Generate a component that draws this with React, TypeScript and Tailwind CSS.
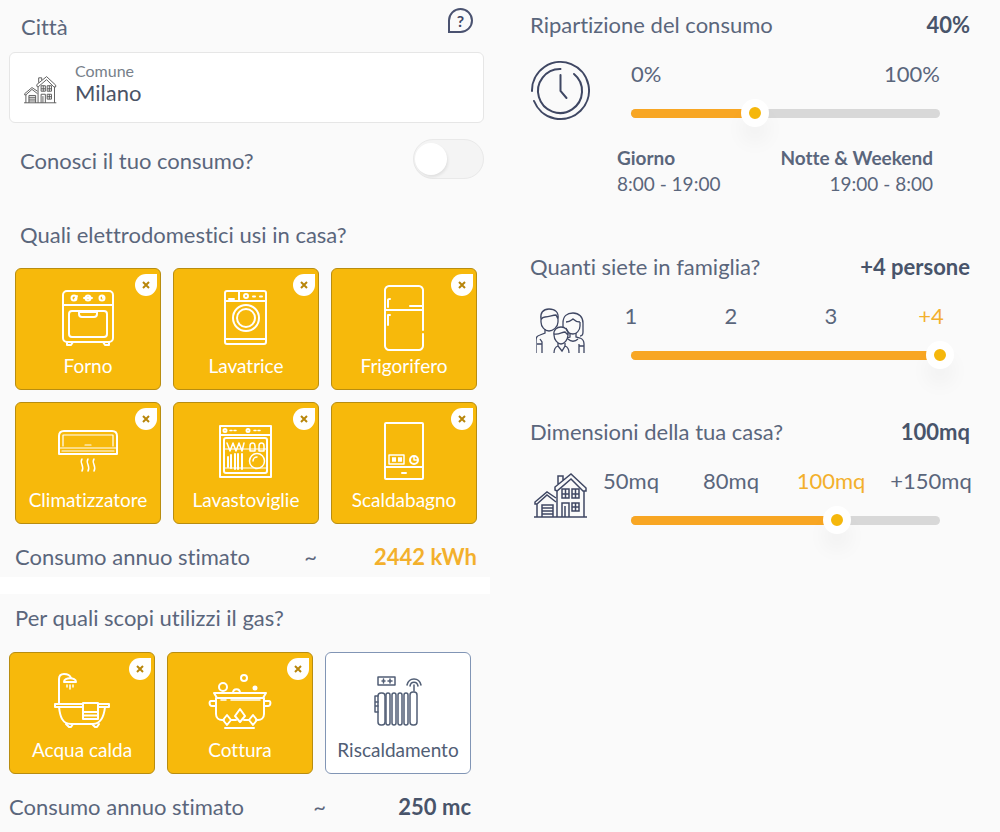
import { useState, type ReactNode } from "react";
import clsx from "clsx";

function OvenIcon() {
  return (
    <>
      <rect x="8" y="6" width="50" height="51" rx="4" />
      <path d="M8 20h50M12 57v3h4l2-3M54 57v3h-4l-2-3" />
      <rect x="14" y="26" width="38" height="26" rx="3" />
      <path d="M24 27h18v2c0 2-1 3-3 3H27c-2 0-3-1-3-3z" />
      <circle cx="19" cy="13" r="2.5" />
      <circle cx="33" cy="13" r="2.5" />
      <circle cx="47" cy="13" r="2.5" />
      <path d="M29 13h8M20 14l2-3M48 13v-2" />
    </>
  );
}

function WasherIcon() {
  return (
    <>
      <rect x="12" y="6" width="41" height="53" rx="2" />
      <path d="M12 16h41M26 6v10M12 54h41M16 14h5M40 11.500h2M47 11.500h2" />
      <circle cx="33" cy="33" r="13" />
      <circle cx="33" cy="33" r="9" />
      <circle cx="33" cy="11" r="2" />
    </>
  );
}

function FridgeIcon() {
  return (
    <>
      <path d="M52 45V5c0-2-2-4-4-4H18c-2 0-4 2-4 4v56c0 2 2 4 4 4h30c2 0 4-2 4-4V49" />
      <path d="M14 25h38M39 21h12M17 22v-7c0-1 1-1 2-1M17 40V30h2" />
    </>
  );
}

function AirConditionerIcon() {
  return (
    <>
      <path d="M4 35V17c0-3 2-5 5-5h48c3 0 5 2 5 5v18z" />
      <path d="M8 27V16h50v11M4 29h58M30 26h6M7 32h52" strokeWidth="1.2" />
      <path d="M27 40c-3 4 3 7 0 12M33 40c-3 4 3 7 0 12M39 40c-3 4 3 7 0 12" strokeWidth="1.5" />
    </>
  );
}

function DishwasherIcon() {
  return (
    <>
      <path d="M7 7h51v51H7zM7 16h51" />
      <rect x="11" y="19" width="43" height="35" rx="2" />
      <path d="M12 30h41M12 49h41" strokeWidth="1.2" />
      <path d="M14 24l3 8 3-8 3 8 3-8 3 8 2-8M37 32v-5c0-4 5-4 5 0v5zM46 32v-5c0-4 5-4 5 0v5z" strokeWidth="1.5" />
      <path d="M15 38v10M18 36v13M22 35v15M25 35v15M29 35v15" />
      <circle cx="44" cy="42" r="7.5" strokeWidth="1.5" />
      <path d="M40 42a4 4 0 0 1 4-4" strokeWidth="1.5" />
      <circle cx="12" cy="11.5" r="1.5" />
      <circle cx="35" cy="11.5" r="1.5" />
      <path d="M17 11.5h2M21 11.5h2M41 11.5h2M45 11.5h2" strokeWidth="1.5" />
    </>
  );
}

function BoilerIcon() {
  return (
    <>
      <rect x="14" y="4" width="38" height="56" rx="1" />
      <path d="M14 48h38M31 54h4" />
      <path d="M18 36h15v9H18z" strokeWidth="1.5" />
      <path d="M22 39v3M24 39v3M28 39v3M30 39v3" />
      <circle cx="43" cy="41" r="4" />
      <path d="M43 38v3h3" strokeWidth="1.5" />
    </>
  );
}

function BathIcon() {
  return (
    <>
      <path d="M10 35V10c0-3 2-5 5-5s6 1 7 4" />
      <path d="M15 13c0-5 12-5 12 0z" />
      <path d="M18 16v2M21 16v4M24 16v2" strokeWidth="1.5" />
      <path d="M34 35H6v3h28M49 35h11v3H49M10 38c1 9 3 17 12 17h22c8 0 11-8 12-17" />
      <path d="M34 34h15v16H34zM35 43h13M35 46.500h13" />
      <path d="M17 55l3 3h2l2-3M43 55l3 3h2l2-3" />
    </>
  );
}

function PotIcon() {
  return (
    <>
      <path d="M7 24h52l-3 5H10zM9 29v16c0 4 3 6 6 6h2M57 29v16c0 4-3 6-6 6h-2" />
      <path d="M9 32H4c-2 0-2 5 1 5h4M57 32h5c2 0 2 5-1 5h-4" />
      <path d="M14 31h5M24 31h29" strokeWidth="1.5" />
      <path d="M20 46l4 5-4 5-4-5zM33 40l5 7-5 6-5-6zM46 46l4 5-4 5-4-5z" />
      <path d="M18 59h29M24 51h5M37 51h5" />
      <circle cx="16" cy="18" r="4" />
      <circle cx="37" cy="9" r="3" />
      <circle cx="48" cy="19" r="1.5" fill="currentColor" />
      <path d="M26 24c0-5 7-5 7 0" />
    </>
  );
}

function RadiatorIcon() {
  return (
    <g strokeWidth="1.5">
      <path d="M13 8h17v8H13zM17 12h3M23 12h4M18.500 10v4M25 10v4" />
      <rect x="13" y="24" width="7" height="32" rx="3" />
      <path d="M13 27h-3v6h3M13 37h-3v6h3M10 33v4" />
      <rect x="21" y="24" width="4" height="32" rx="2" />
      <rect x="27" y="24" width="4" height="32" rx="2" />
      <rect x="33" y="24" width="4" height="32" rx="2" />
      <rect x="39" y="24" width="4" height="32" rx="2" />
      <rect x="45" y="23" width="7" height="33" rx="3" />
      <path d="M49 22v-6M42 16c2-8 12-8 14 0M45 17c1-5 7-5 8 0" />
    </g>
  );
}

function HouseIcon({ className }: { className: string }) {
  return (
    <svg viewBox="0 0 54 46" className={className} fill="none" stroke="currentColor" strokeWidth="1.5" aria-hidden="true">
      <path d="M21 17v-3L37 1l15 14v3h-3L37 6 23 18zM24 11V3h5v4M23 18v26M50 18v26" />
      <path d="M22 29l-9-7-10 9H1v-2l12-10 9 6M3 31v13M0 44h53" />
      <path d="M28 16h7v9h-7zM28 21h7M31.500 16v9M38 16h7v9h-7zM38 21h7M41.500 16v9M38 30h7v8h-7zM38 34h7M41.500 30v8" />
      <path d="M28 44V30h7v14M31 44V33M8 44V32h11v12M8 35h11M8 38h11M8 41h11" />
    </svg>
  );
}

function FamilyIcon() {
  return (
    <svg viewBox="0 0 50 46" className="mt-1.5 ml-1.5 h-[46px] w-[50px]" fill="none" stroke="currentColor" strokeWidth="1.3" aria-hidden="true">
      <path d="M5 11C4 5 7 1 13 1s10 3 9 10M5 11v3c0 5 4 9 8 9s9-4 9-9v-3M5 12c1-2 1-3 4-3 5 0 7-2 11-2l2 4" />
      <path d="M9 21v4l-5 2c-3 1-4 2-4 6v12M6 45V34l-2-3M1 36h5" />
      <path d="M27 19v-4c0-7 4-10 10-10s10 4 10 10v9c0 3-1 4-3 4M30 14c5 0 6-3 7-3 2 2 4 3 7 3M30 20c1 4 4 6 7 6s7-3 7-8v-4" />
      <path d="M34 25v4l-3 1M40 25v4l4 1c3 1 4 3 4 6v9M43 45V36M43 38h5M32 31c3 3 7 3 10 0" />
      <path d="M18 27c-1-5 3-8 7-8s8 3 7 8c0 5-4 9-7 9s-7-4-7-9zM18 26c5 1 8-2 11-2l3 3" />
      <path d="M22 35v3l4 5 3-5v-3M22 38c-3 1-4 3-4 7M29 38c3 1 4 3 4 7" />
    </svg>
  );
}

function ClockIcon() {
  return (
    <svg viewBox="0 0 60 60" className="mt-px h-[60px] w-[60px]" fill="none" stroke="currentColor" strokeWidth="2" strokeLinecap="round" aria-hidden="true">
      <path d="M2 30A28.500 28.500 0 1 1 4 40" />
      <path d="M30.500 8A22 22 0 1 0 44 13" />
      <path d="M30.500 14v16l6 7" />
    </svg>
  );
}

interface TileProps {
  name: string;
  icon: ReactNode;
  initial?: boolean;
}

function Tile({ name, icon, initial = true }: TileProps) {
  const [selected, setSelected] = useState(initial);

  return (
    <div className="relative">
      <button
        type="button"
        aria-pressed={selected}
        onClick={() => setSelected(true)}
        className={clsx(
          "flex h-[122px] w-full flex-col items-center rounded-md border pt-4 text-[19px] leading-[30px]",
          selected ? "border-[#b88d10] bg-[#f7b90b] text-white" : "border-[#8195b5] bg-white text-[#515e75]"
        )}
      >
        <svg viewBox="0 0 66 66" className="size-[66px]" fill="none" stroke="currentColor" strokeWidth="2" strokeLinecap="round" strokeLinejoin="round" aria-hidden="true">
          {icon}
        </svg>
        {name}
      </button>
      {selected && (
        <button
          type="button"
          aria-label={`Rimuovi ${name}`}
          onClick={() => setSelected(false)}
          className="absolute top-1.5 right-1 flex size-[22px] items-center justify-center rounded-full rounded-tr-md bg-white text-[#b8860b]"
        >
          <svg viewBox="0 0 8 8" className="size-2" stroke="currentColor" strokeWidth="2" aria-hidden="true">
            <path d="M1 1l6 6M7 1L1 7" />
          </svg>
        </button>
      )}
    </div>
  );
}

interface SliderProps {
  label: string;
  value: number;
  max: number;
  onChange: (value: number) => void;
}

function Slider({ label, value, max, onChange }: SliderProps) {
  return (
    <div className="relative mt-[21px] mr-[41px] ml-[50px] h-[9px] rounded-full bg-[#d8d8d8]">
      <div className="h-full rounded-full bg-[#f8a623]" style={{ width: `${(value / max) * 100}%` }} />
      {/* the input is one thumb wider than the track, so the thumb centre reaches both ends */}
      <input
        type="range"
        aria-label={label}
        min={0}
        max={max}
        value={value}
        onChange={(e) => onChange(Number(e.target.value))}
        className="absolute -inset-x-3.5 -top-2.5 h-7 cursor-pointer appearance-none bg-transparent [&::-webkit-slider-thumb]:size-7 [&::-webkit-slider-thumb]:appearance-none [&::-webkit-slider-thumb]:rounded-full [&::-webkit-slider-thumb]:border-8 [&::-webkit-slider-thumb]:border-white [&::-webkit-slider-thumb]:bg-[#f5b70c] [&::-webkit-slider-thumb]:shadow-[0_16px_20px_rgba(0,0,0,0.04)]"
      />
    </div>
  );
}

interface QuestionProps {
  title: string;
  value: string;
  icon: ReactNode;
  children: ReactNode;
}

function Question({ title, value, icon, children }: QuestionProps) {
  return (
    <section>
      <div className="mr-[11px] flex justify-between">
        <h2>{title}</h2>
        <strong className="font-bold text-[#48546a]">{value}</strong>
      </div>
      <div className="mt-[21px] flex">
        <div className="w-[60px] shrink-0 text-[#3f4763]">{icon}</div>
        <div className="-ml-[9px] flex-1">{children}</div>
      </div>
    </section>
  );
}

function Steps({ steps, active }: { steps: string[]; active: number }) {
  return (
    <div className="grid grid-cols-4 text-center">
      {steps.map((step, i) => (
        <span key={step} className={clsx(i === active && "text-[#f3b02c]")}>
          {step}
        </span>
      ))}
    </div>
  );
}

const people = ["1", "2", "3", "+4"];
const sizes = ["50mq", "80mq", "100mq", "+150mq"];

export default function App() {
  const [city, setCity] = useState("Milano");
  const [share, setShare] = useState(40);
  const [family, setFamily] = useState(3);
  const [size, setSize] = useState(2);

  return (
    <main className="grid min-h-screen grid-cols-2 bg-[#fafafa] font-['Lato',sans-serif] text-[22px] leading-7 text-[#5a667c] [font-variant-ligatures:none]">
      <div className="pt-2">
        <div className="pr-4 pl-[9px]">
          <div className="mb-[11px] flex items-start justify-between pr-[11px] pl-3">
            <h2 className="pt-[5px]">Città</h2>
            <button type="button" aria-label="Aiuto" className="flex size-[25px] items-center justify-center rounded-full rounded-bl-xs border-2 border-[#4a5270] text-base font-bold text-[#3f4763]">
              ?
            </button>
          </div>
          <div className="flex h-[71px] items-center rounded-md border border-[#e6e6e6] bg-white">
            <HouseIcon className="mt-1 mr-[18px] ml-3.5 h-7 w-[33px] text-[#555]" />
            <div className="flex flex-1 flex-col pb-2.5">
              <label htmlFor="city" className="text-base leading-5 text-[#777f8a]">
                Comune
              </label>
              <input id="city" value={city} onChange={(e) => setCity(e.target.value)} className="h-6 w-full leading-6 text-[#4a5366] outline-none" />
            </div>
          </div>
          <div className="mt-4 flex h-10 items-center justify-between pl-[11px]">
            <label htmlFor="known" className="pt-1">
              Conosci il tuo consumo?
            </label>
            <input
              id="known"
              type="checkbox"
              role="switch"
              className="flex h-10 w-[71px] cursor-pointer appearance-none items-center rounded-full border border-[#e9e9e9] bg-[#f4f4f4] pl-px before:size-8 before:rounded-full before:bg-white before:shadow-[1px_2px_3px_rgba(0,0,0,0.08)] checked:justify-end checked:bg-[#f7b90b]"
            />
          </div>
          <h2 className="mt-[42px] pl-[11px]">Quali elettrodomestici usi in casa?</h2>
          <div className="mt-[19px] mr-[7px] ml-1.5 grid grid-cols-3 gap-3">
            <Tile name="Forno" icon={<OvenIcon />} />
            <Tile name="Lavatrice" icon={<WasherIcon />} />
            <Tile name="Frigorifero" icon={<FridgeIcon />} />
            <Tile name="Climatizzatore" icon={<AirConditionerIcon />} />
            <Tile name="Lavastoviglie" icon={<DishwasherIcon />} />
            <Tile name="Scaldabagno" icon={<BoilerIcon />} />
          </div>
          <div className="mt-[19px] mr-[7px] ml-1.5 grid grid-cols-[1fr_auto_160px]">
            <span>Consumo annuo stimato</span>
            <span>~</span>
            <strong className="text-right font-bold text-[#f3b02c]">2442 kWh</strong>
          </div>
        </div>
        <div className="mt-1.5 mr-2.5 h-[17px] bg-white" />
        <div className="pr-[29px] pl-[9px]">
          <h2 className="mt-2.5 pl-1.5">Per quali scopi utilizzi il gas?</h2>
          <div className="mt-5 grid grid-cols-3 gap-3">
            <Tile name="Acqua calda" icon={<BathIcon />} />
            <Tile name="Cottura" icon={<PotIcon />} />
            <Tile name="Riscaldamento" icon={<RadiatorIcon />} initial={false} />
          </div>
          <div className="mt-[19px] grid grid-cols-[1fr_auto_145px]">
            <span>Consumo annuo stimato</span>
            <span>~</span>
            <strong className="text-right font-bold text-[#48546a]">250 mc</strong>
          </div>
        </div>
      </div>

      <div className="pt-[11px] pr-[19px] pl-[30px]">
        <Question title="Ripartizione del consumo" value={`${share}%`} icon={<ClockIcon />}>
          <div className="mr-[41px] ml-[50px] flex justify-between">
            <span>0%</span>
            <span>100%</span>
          </div>
          <Slider label="Ripartizione del consumo" value={share} max={100} onChange={setShare} />
          <div className="mt-[27px] mr-12 ml-9 flex justify-between text-[19px] leading-[26px]">
            <p>
              <strong className="block font-bold">Giorno</strong>
              8:00 - 19:00
            </p>
            <p className="text-right">
              <strong className="block font-bold">Notte &amp; Weekend</strong>
              19:00 - 8:00
            </p>
          </div>
        </Question>
        <div className="mt-14">
          <Question title="Quanti siete in famiglia?" value={`${people[family]} persone`} icon={<FamilyIcon />}>
            <Steps steps={people} active={family} />
            <Slider label="Quanti siete in famiglia?" value={family} max={3} onChange={setFamily} />
          </Question>
        </div>
        <div className="mt-[58px]">
          <Question title="Dimensioni della tua casa?" value={sizes[size]} icon={<HouseIcon className="mt-1.5 ml-1 h-[46px] w-[54px]" />}>
            <Steps steps={sizes} active={size} />
            <Slider label="Dimensioni della tua casa?" value={size} max={3} onChange={setSize} />
          </Question>
        </div>
      </div>
    </main>
  );
}
